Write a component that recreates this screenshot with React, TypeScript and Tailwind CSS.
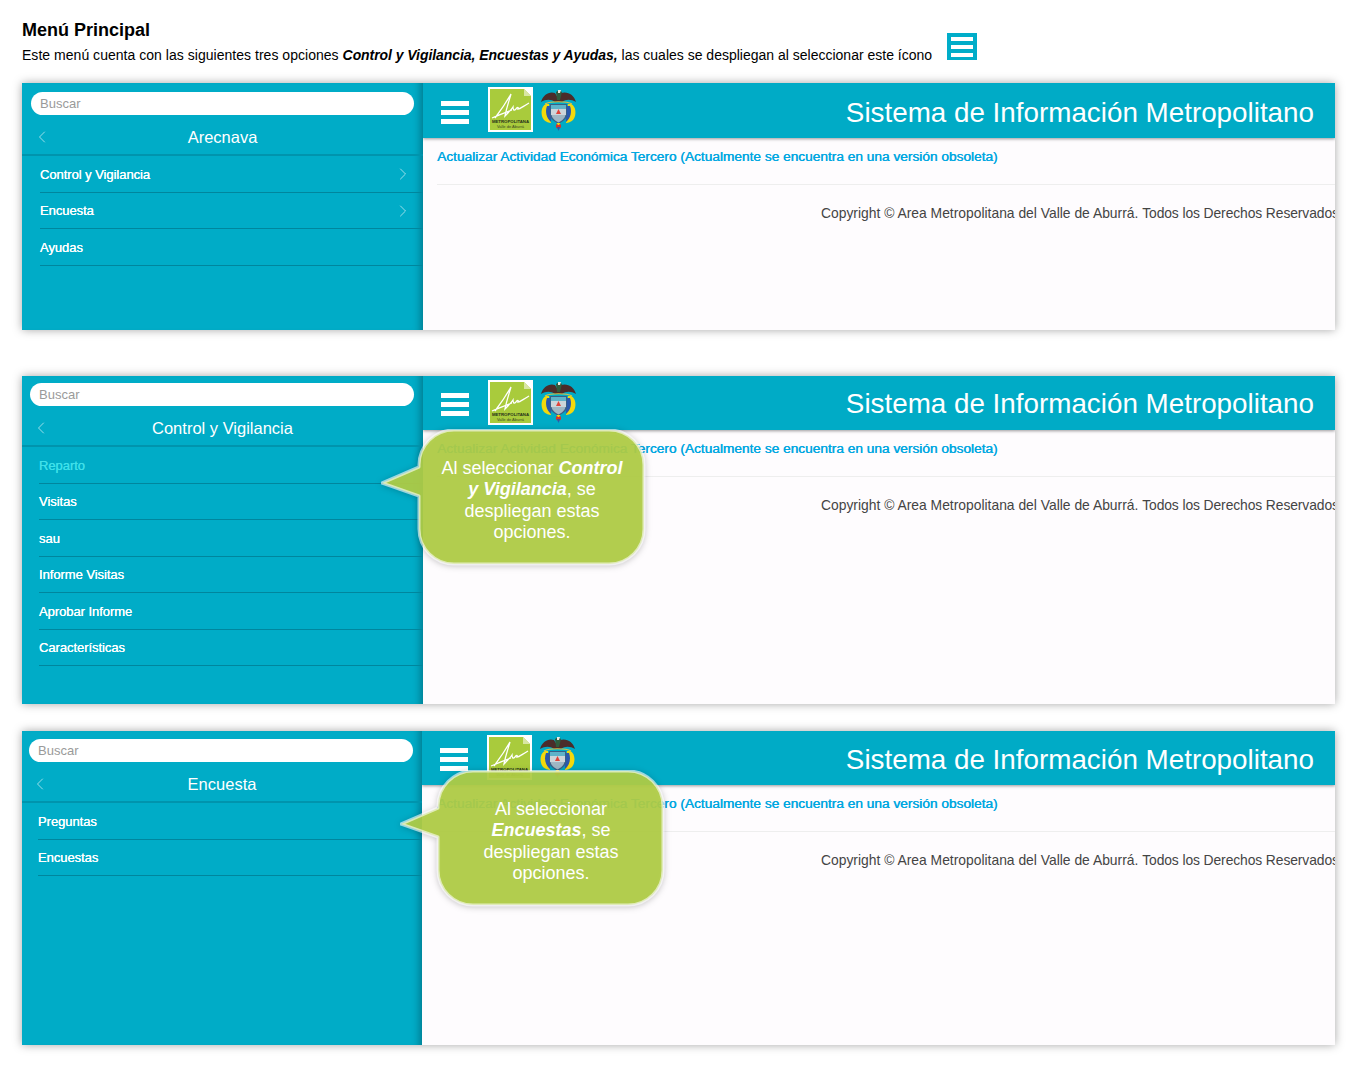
import { ChevronLeft, ChevronRight } from "lucide-react";
import type { ReactNode } from "react";

function AreaLogo() {
  return (
    <svg width="45" height="45" viewBox="0 0 45 45" className="shrink-0">
      <rect width="45" height="45" fill="#fff" />
      <path d="M2 2H36L43 9V43H2Z" fill="#a9cb3c" />
      <path d="M36 2L43 9H36Z" fill="#d9e6a4" />
      <path
        d="M7 31C13 23 19 14 23 7C21 14 18 23 17 29C20 26 23 23 25 20C25 23 26 24 28 22C29 20 31 20 30 22C32 22 34 20 41 16M4 31C12 28 18 25 24 23"
        fill="none"
        stroke="#fff"
        strokeWidth="1.3"
      />
      <text x="22.5" y="36" textAnchor="middle" fontSize="4.3" fontWeight="700" fill="#26301a" className="font-['Liberation_Sans',sans-serif]">
        METROPOLITANA
      </text>
      <text x="22.5" y="41" textAnchor="middle" fontSize="4" fill="#3b4a22" className="font-['Liberation_Sans',sans-serif]">
        Valle de Aburrá
      </text>
    </svg>
  );
}

function Shield() {
  return (
    <svg width="37" height="42" viewBox="0 0 37 42" className="shrink-0">
      {/* eagle */}
      <path d="M1 13C3 6 9 2 15 4L18 9L21 4C28 2 34 6 36 13C31 10 26 10 22 13H15C11 10 6 10 1 13Z" fill="#4b2c2a" />
      <path d="M16 3L19 1L22 3L20 11H17Z" fill="#2f5a3c" />
      <path d="M18 1H21L20 4H18Z" fill="#e8e8e0" />
      <path d="M5 15C10 12 27 12 32 15" fill="none" stroke="#d9c14a" strokeWidth="1.2" />
      {/* flags */}
      <path d="M6 15C1 17 0 26 4 31C6 33 9 34 11 34L9 15Z" fill="#f3d90c" />
      <path d="M7 17C5 22 6 29 11 33L12 17Z" fill="#2a58ad" />
      <path d="M31 15C36 17 37 26 33 31C31 33 28 34 26 34L28 15Z" fill="#f3d90c" />
      <path d="M30 17C32 22 31 29 26 33L25 17Z" fill="#2a58ad" />
      {/* shield */}
      <path d="M10 15H27V26C27 30 22 33 18.500 35C15 33 10 30 10 26Z" fill="#3a5f86" />
      <rect x="11" y="16" width="15" height="4" fill="#5fb3c9" />
      <rect x="11" y="20" width="15" height="6" fill="#cdd5da" />
      <path d="M11.500 26H25.500C25 29 22 32 18.500 33.500C15 32 12 29 11.500 26Z" fill="#9fb7c4" />
      <path d="M16 25L18.500 20L21 25Z" fill="#e0433a" />
      {/* ribbon knot */}
      <circle cx="18.500" cy="37" r="2.600" fill="#d8342a" />
      <path d="M17 38H20L18.500 42Z" fill="#2a58ad" />
      <path d="M16.500 34H20.500L19 36H18Z" fill="#f3d90c" />
    </svg>
  );
}

function Callout({ className, children }: { className: string; children: ReactNode }) {
  return (
    <div className={`absolute z-10 h-[138px] w-[265px] ${className}`}>
      <svg width="265" height="138" viewBox="0 0 265 138" className="absolute inset-0 drop-shadow-[0_1px_3px_rgba(0,0,0,0.25)]">
        <path
          d="M1 54L38 38V36A35 35 0 0 1 73 1H228A35 35 0 0 1 263 36V100A35 35 0 0 1 228 135H73A35 35 0 0 1 38 100V67Z"
          fill="#b0cd45"
          fillOpacity="0.93"
          stroke="#fff"
          strokeOpacity="0.6"
          strokeWidth="3"
          strokeLinejoin="round"
        />
      </svg>
      <p className="relative ml-[38px] w-[226px] pt-[29px] text-center text-[18px] leading-[21.3px] text-white">{children}</p>
    </div>
  );
}

type PanelProps = {
  title: string;
  rows: { label: string; more?: boolean; dim?: boolean }[];
  height: string;
  side: string;
  searchBox: string;
  indent: string;
  back: string;
  headerH: string;
  brandTop: string;
  contentLeft: string;
  children?: ReactNode;
};

function Panel({ title, rows, height, side, searchBox, indent, back, headerH, brandTop, contentLeft, children }: PanelProps) {
  return (
    <section className={`relative flex overflow-hidden shadow-[0_0_9px_rgba(0,0,0,0.35)] ${height}`}>
      <aside className={`shrink-0 bg-[#00acc7] shadow-[inset_-9px_0_7px_-6px_rgba(0,70,85,0.45)] ${side}`}>
        <input
          readOnly
          placeholder="Buscar"
          className={`block h-[23px] rounded-full bg-white pl-[9px] text-[13px] outline-none placeholder:text-[#9a9a9a] ${searchBox}`}
        />
        <div className="relative flex h-[41px] items-center justify-center border-b-2 border-[#0094ad] pt-[5px] text-[16.5px] text-white">
          <ChevronLeft size={20} strokeWidth={1.2} className={`absolute text-white/60 ${back}`} />
          {title}
        </div>
        <ul className={indent}>
          {rows.map((row) => (
            <li
              key={row.label}
              className={`flex h-[36.5px] items-center justify-between border-b border-[#00869d] pt-[1px] pr-[10px] text-[13px] tracking-[-0.05px] [text-shadow:0.1px_0_0_currentColor] ${
                row.dim ? "text-[#3fe0ea]" : "text-white"
              }`}
            >
              {row.label}
              {row.more && <ChevronRight size={20} strokeWidth={1.2} className="text-white/60" />}
            </li>
          ))}
        </ul>
      </aside>
      <div className="min-w-0 flex-1 overflow-hidden bg-[#fefcfe]">
        <header className={`relative flex items-center justify-between bg-[#00abc6] pr-[21px] shadow-[0_1px_3px_rgba(0,0,0,0.4)] ${headerH}`}>
          <div className="flex items-center">
            <div className="mt-[3px] ml-[18px] flex h-[23px] w-[28px] flex-col justify-between">
              <div className="h-[5px] bg-white" />
              <div className="h-[5px] bg-white" />
              <div className="h-[5px] bg-white" />
            </div>
            <div className="mb-[2px] ml-[19px]">
              <AreaLogo />
            </div>
            <div className="mb-[2px] ml-[7px]">
              <Shield />
            </div>
          </div>
          <h2 className={`text-[27.8px] font-normal whitespace-nowrap text-white ${brandTop}`}>Sistema de Información Metropolitano</h2>
        </header>
        <div className={contentLeft}>
          <a className="mt-[10px] block text-[13.7px] leading-[18px] font-medium whitespace-nowrap text-[#00a7e1] [text-shadow:0.4px_0_0_#00a7e1]">
            Actualizar Actividad Económica Tercero (Actualmente se encuentra en una versión obsoleta)
          </a>
          <div className="mt-[18px] border-t border-[#eeeeee]" />
          <p className="mt-[19px] ml-[384px] text-[13.87px] leading-[18px] whitespace-nowrap text-[#444]">
            Copyright © Area Metropolitana del Valle de Aburrá. <span className="tracking-[-0.1px]">Todos los Derechos Reservados</span>
          </p>
        </div>
      </div>
      {children}
    </section>
  );
}

export default function App() {
  return (
    <div className="w-[1335px] bg-white pb-[27px] pl-[22px] font-['Liberation_Sans',sans-serif] text-black">
      <div className="flex h-[83px] flex-col">
        <h1 className="pt-[19px] text-[18px] leading-[22px] font-bold">Menú Principal</h1>
        <div className="mt-[-6px] flex items-start">
          <p className="mt-[11px] text-[14px] leading-[18px] tracking-[0.03px] whitespace-nowrap">
            Este menú cuenta con las siguientes tres opciones <b className="tracking-[-0.06px] italic">Control y Vigilancia, Encuestas y Ayudas,</b>{" "}
            <span className="tracking-[0px]">las cuales se despliegan al seleccionar este ícono</span>
          </p>
          <div className="mt-[-2px] ml-[15px] flex h-[27px] w-[30px] flex-col justify-center gap-[4px] bg-[#00adc9] px-[4px]">
            <div className="h-[4px] bg-white" />
            <div className="h-[4px] bg-white" />
            <div className="h-[4px] bg-white" />
          </div>
        </div>
      </div>

      <Panel
        title="Arecnava"
        rows={[{ label: "Control y Vigilancia", more: true }, { label: "Encuesta", more: true }, { label: "Ayudas" }]}
        height="h-[247px]"
        side="w-[401px] pt-[9px]"
        searchBox="ml-[9px] w-[383px]"
        indent="pl-[18px]"
        back="left-[10px]"
        headerH="h-[55px]"
        brandTop="pt-[5px]"
        contentLeft="pl-[14px]"
      />

      <div className="mt-[46px]">
        <Panel
          title="Control y Vigilancia"
          rows={[
            { label: "Reparto", dim: true },
            { label: "Visitas" },
            { label: "sau" },
            { label: "Informe Visitas" },
            { label: "Aprobar Informe" },
            { label: "Características" },
          ]}
          height="h-[328px]"
          side="w-[401px] pt-[7px]"
          searchBox="ml-[8px] w-[384px]"
          indent="pl-[17px]"
          back="left-[9px]"
          headerH="h-[54px]"
          brandTop="pt-[1px]"
          contentLeft="pl-[14px]"
        >
          <Callout className="top-[53px] left-[359px]">
            Al seleccionar <b className="italic">Control</b>
            <br />
            <b className="italic">y Vigilancia</b>, se
            <br />
            despliegan estas
            <br />
            opciones.
          </Callout>
        </Panel>
      </div>

      <div className="mt-[27px]">
        <Panel
          title="Encuesta"
          rows={[{ label: "Preguntas" }, { label: "Encuestas" }]}
          height="h-[314px]"
          side="w-[400px] pt-[8px]"
          searchBox="ml-[7px] w-[384px]"
          indent="pl-[16px]"
          back="left-[8px]"
          headerH="h-[54px]"
          brandTop="pt-[3px]"
          contentLeft="pl-[15px]"
        >
          <Callout className="top-[39px] left-[378px]">
            Al seleccionar
            <br />
            <b className="italic">Encuestas</b>, se
            <br />
            despliegan estas
            <br />
            opciones.
          </Callout>
        </Panel>
      </div>
    </div>
  );
}
